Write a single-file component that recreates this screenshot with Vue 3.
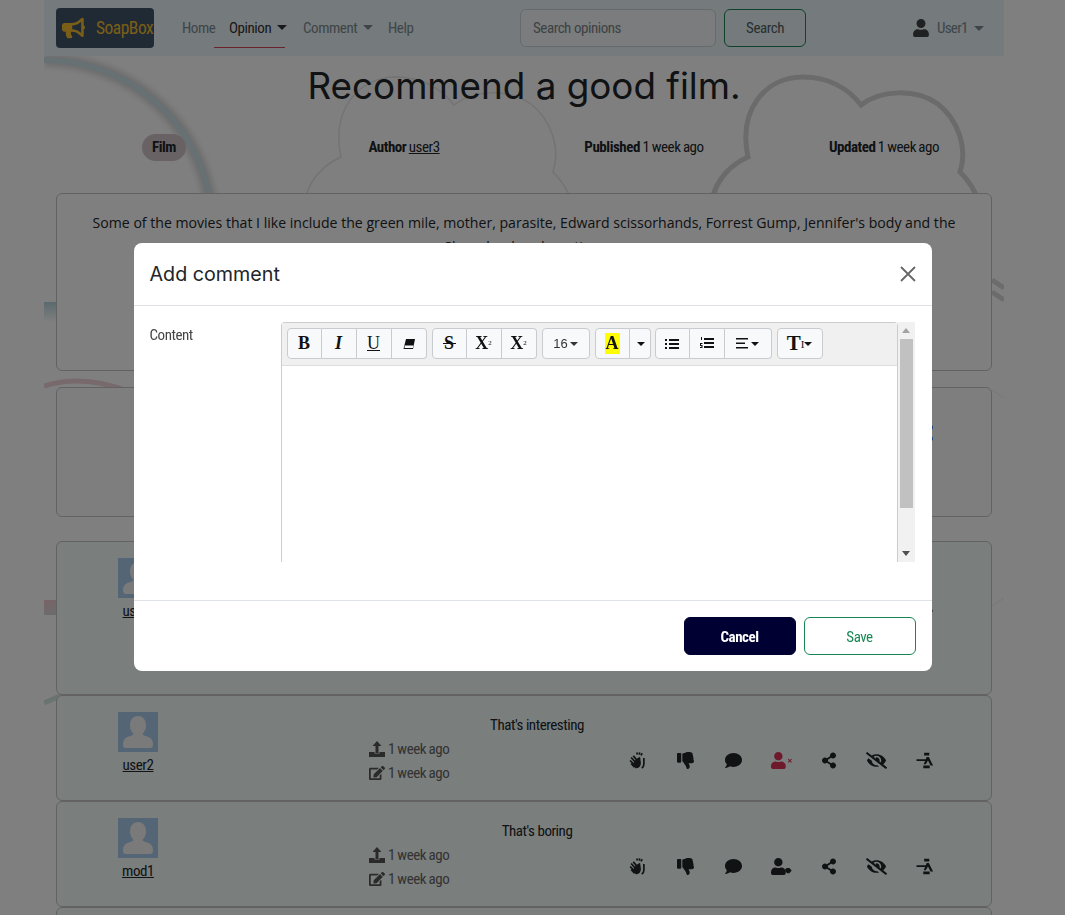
<template>
  <div class="page">
    <div class="container">
      <svg class="backdrop" width="960" height="860" viewBox="44 56 960 860" fill="none">
        <path class="arc-shadow" d="M44 60A168 166 0 0 1 212 226" />
        <path d="M44 60A168 166 0 0 1 212 226" stroke="#cfe1e6" stroke-width="6" />
        <path class="cloud-thin" d="M305 200C309 180 323 165 341 157C331 110 358 77 396 77C421 77 441 88 454 105C473 90 508 88 531 104C551 120 561 148 553 172C561 180 567 188 571 200" />
        <path class="cloud-thick" d="M712 200C716 180 730 165 748 157C738 110 765 77 803 77C828 77 848 88 861 105C880 90 915 88 938 104C958 120 968 148 960 172C968 180 974 188 978 200" />
        <rect x="44" y="302" width="12" height="20" fill="url(#fadeBlue)" />
        <path d="M44 386C70 378 100 380 130 392" stroke="#f0d4d8" stroke-width="5" />
        <rect x="44" y="600" width="12" height="15" fill="url(#fadePink)" />
        <path d="M44 703L60 696" stroke="#d5e6e0" stroke-width="5" />
        <path d="M992 280L1004 288M992 292L1004 300" stroke="#d8d8d8" stroke-width="5" />
        <path d="M992 390L1004 398M992 606L1004 598" stroke="#ececec" stroke-width="1" />
        <defs>
          <linearGradient id="fadeBlue" x1="0" y1="0" x2="0" y2="1">
            <stop offset="0" stop-color="#b5d4de" />
            <stop offset="1" stop-color="#ffffff" />
          </linearGradient>
          <linearGradient id="fadePink" x1="0" y1="0" x2="0" y2="1">
            <stop offset="0" stop-color="#f0c8ce" />
            <stop offset="1" stop-color="#d8d8d8" />
          </linearGradient>
        </defs>
      </svg>

      <nav class="navbar">
        <a class="brand">
          <svg class="brand-icon" viewBox="0 0 576 512"><path :d="paths.bullhorn" /></svg>
          <span>SoapBox</span>
        </a>
        <ul class="nav-links">
          <li class="link-home">Home</li>
          <li class="link-active">Opinion <i class="caret"></i></li>
          <li class="link-comment">Comment <i class="caret"></i></li>
          <li class="link-help">Help</li>
        </ul>
        <input class="search-input" placeholder="Search opinions" />
        <button class="search-btn">Search</button>
        <div class="user-menu">
          <svg class="user-icon" viewBox="0 0 448 512"><path :d="paths.user" /></svg>
          <span class="user-name">User1</span>
          <i class="caret"></i>
        </div>
      </nav>

      <h1 class="title">Recommend a good film.</h1>

      <div class="meta">
        <div><span class="pill">Film</span></div>
        <div><b>Author</b> <u>user3</u></div>
        <div><b>Published</b> 1 week ago</div>
        <div><b>Updated</b> 1 week ago</div>
      </div>

      <section class="card body-card">
        Some of the movies that I like include the green mile, mother, parasite, Edward scissorhands, Forrest Gump, Jennifer's body and the Shawshank redemption.
      </section>

      <section class="card stats-card">
        <svg class="stats-icon" viewBox="0 0 448 512"><path :d="paths.share" /></svg>
      </section>

      <div class="comments">
        <article v-for="row in comments" :key="row.user" class="card row" :style="{ height: row.height + 'px' }">
          <div class="who">
            <svg class="avatar" viewBox="0 0 40 40">
              <rect width="40" height="40" fill="#a8cbec" />
              <path d="M20 4c5.500 0 8 4.500 8 9.500 0 3.500-1.500 6.500-3.500 8.500 1 1.500 3 2 6 3 3 1.200 4.500 3.500 4.500 7.500 0 2.500-1 3.500-3 3.500H8c-2 0-3-1-3-3.500 0-4 1.500-6.300 4.500-7.500 3-1 5-1.500 6-3-2-2-3.500-5-3.500-8.500C12 8.500 14.500 4 20 4z" fill="#f4f4f4" />
            </svg>
            <u>{{ row.user }}</u>
          </div>
          <div class="main">
            <div class="comment-text">{{ row.text }}</div>
            <div class="details">
              <div class="dates">
                <div class="date">
                  <svg viewBox="0 0 16 16"><path d="M0 11h5.500v1.500h5V11H16v5H0zM6.500 12V5h-3L8 0l4.500 5h-3v7z" /></svg>
                  1 week ago
                </div>
                <div class="date">
                  <svg viewBox="0 0 576 512"><path :d="paths.edit" /></svg>
                  1 week ago
                </div>
              </div>
              <div class="actions">
                <span v-for="icon in row.icons" :key="icon" class="action" :class="{ danger: icon === 'userTimes' }">
                  <svg :viewBox="icons[icon].box" :style="{ width: icons[icon].width + 'px' }">
                    <path :d="icons[icon].d" />
                    <path v-if="icons[icon].lines" class="lines" :d="icons[icon].lines" />
                  </svg>
                </span>
              </div>
            </div>
          </div>
        </article>
        <article class="card row"></article>
      </div>
    </div>

    <div class="overlay">
      <div class="modal">
        <header class="modal-head">
          <h2>Add comment</h2>
          <svg class="close" viewBox="0 0 16 16"><path d="M1 1l14 14M15 1L1 15" /></svg>
        </header>
        <div class="modal-body">
          <label>Content</label>
          <div class="editor">
            <div class="editor-main">
              <div class="toolbar">
                <div class="group">
                  <button class="tool glyph"><b>B</b></button>
                  <button class="tool glyph"><b><i>I</i></b></button>
                  <button class="tool glyph"><u>U</u></button>
                  <button class="tool">
                    <svg width="14" height="14" viewBox="0 0 14 14"><path d="M4 2h9l-2 10H1.500z" fill="#111" /><path d="M2.800 8.500h8.700l-.6 2.600H2.500z" fill="#f8f9fa" /></svg>
                  </button>
                </div>
                <div class="group">
                  <button class="tool glyph"><b>S</b><i class="strike-bar"></i></button>
                  <button class="tool glyph"><b>X</b><sup>2</sup></button>
                  <button class="tool glyph"><b>X</b><sub>2</sub></button>
                </div>
                <div class="group">
                  <button class="tool size">16 <i class="caret small"></i></button>
                </div>
                <div class="group">
                  <button class="tool glyph"><b class="highlight">A</b></button>
                  <button class="tool narrow"><i class="caret small"></i></button>
                </div>
                <div class="group lists">
                  <button class="tool">
                    <svg width="14" height="12" viewBox="0 0 14 12"><path d="M0 1h2v2H0zM0 5h2v2H0zM0 9h2v2H0zM4 1h10v2H4zM4 5h10v2H4zM4 9h10v2H4z" fill="#111" /></svg>
                  </button>
                  <button class="tool">
                    <svg width="14" height="13" viewBox="0 0 14 13"><path d="M1 0h1v3H1zM0 6h2.500v1H1v1h1.500v3H0v-1h1.500V9H0zM4 1h10v2H4zM4 5h10v2H4zM4 9h10v2H4z" fill="#111" /></svg>
                  </button>
                  <button class="tool wide">
                    <svg width="12" height="11" viewBox="0 0 12 11"><path d="M0 0h12v1.600H0zM0 4.500h9v1.600H0zM0 9h12v1.600H0z" fill="#111" /></svg>
                    <i class="caret small"></i>
                  </button>
                </div>
                <div class="group">
                  <button class="tool wide glyph height"><b>T</b><span class="thin">I</span><i class="caret small"></i></button>
                </div>
              </div>
              <div class="editable"></div>
            </div>
            <div class="scrollbar">
              <i class="arrow up"></i>
              <div class="thumb"></div>
              <i class="arrow down"></i>
            </div>
          </div>
        </div>
        <footer class="modal-foot">
          <button class="btn-cancel">Cancel</button>
          <button class="btn-save">Save</button>
        </footer>
      </div>
    </div>
  </div>
</template>

<script setup>
const paths = {
  bullhorn: 'M576 240c0-23.63-12.95-44.04-32-55.12V32.01C544 23.26 537.02 0 512 0c-7.12 0-14.19 2.38-19.98 7.02l-85.03 68.03C364.28 109.19 310.66 128 256 128H64c-35.35 0-64 28.65-64 64v96c0 35.35 28.65 64 64 64h33.7c-1.39 10.48-2.18 21.14-2.18 32 0 39.77 9.26 77.35 25.56 110.94 5.19 10.69 16.52 17.06 28.4 17.06h74.28c26.05 0 41.69-29.84 25.9-50.56-16.4-21.52-26.15-48.36-26.15-77.44 0-11.11 1.62-21.79 4.41-32H256c54.66 0 108.28 18.81 150.98 52.95l85.03 68.03a32.023 32.023 0 0 0 19.98 7.02c24.92 0 32-22.78 32-32V295.13C563.05 284.04 576 263.63 576 240zm-96 141.42l-33.05-26.44C392.95 311.78 325.12 288 256 288v-96c69.12 0 136.95-23.78 190.95-66.98L480 98.58v282.84z',
  user: 'M224 256c70.7 0 128-57.3 128-128S294.7 0 224 0 96 57.3 96 128s57.3 128 128 128zm89.6 32h-16.7c-22.2 10.2-46.9 16-72.9 16s-50.6-5.8-72.9-16h-16.7C60.2 288 0 348.2 0 422.4V464c0 26.5 21.5 48 48 48h352c26.5 0 48-21.5 48-48v-41.6c0-74.2-60.2-134.4-134.4-134.4z',
  edit: 'M402.6 83.2l90.2 90.2c3.8 3.8 3.8 10 0 13.8L274.4 405.6l-92.8 10.3c-12.4 1.4-22.9-9.1-21.5-21.5l10.3-92.8L388.8 83.2c3.8-3.8 10-3.8 13.8 0zm162-22.9l-48.8-48.8c-15.2-15.2-39.9-15.2-55.2 0l-35.4 35.4c-3.8 3.8-3.8 10 0 13.8l90.2 90.2c3.8 3.8 10 3.8 13.8 0l35.4-35.4c15.2-15.3 15.2-40 0-55.2zM384 346.2V448H64V128h229.8c3.2 0 6.2-1.3 8.5-3.5l40-40c7.6-7.6 2.2-20.5-8.5-20.5H48C21.5 64 0 85.5 0 112v352c0 26.5 21.5 48 48 48h352c26.5 0 48-21.5 48-48V306.2c0-10.7-12.9-16-20.5-8.5l-40 40c-2.2 2.3-3.5 5.3-3.5 8.5z',
  share: 'M352 320c-22.608 0-43.387 7.819-59.79 20.895l-102.486-64.054a96.551 96.551 0 0 0 0-41.683l102.486-64.054C308.613 184.181 329.392 192 352 192c53.019 0 96-42.981 96-96S405.019 0 352 0s-96 42.981-96 96c0 7.158.79 14.13 2.276 20.841L155.790 180.895C139.387 167.819 118.608 160 96 160c-53.019 0-96 42.981-96 96s42.981 96 96 96c22.608 0 43.387-7.819 59.79-20.895l102.486 64.054A96.301 96.301 0 0 0 256 416c0 53.019 42.981 96 96 96s96-42.981 96-96-42.981-96-96-96z',
}

const icons = {
  clap: {
    box: '0 0 20 20',
    width: 17,
    d: 'M8 8.500L13 5.500 14 13C14 17 11.500 19.500 8 19L4 15.500z',
    lines: 'M2.500 6.500l6 6.500M1.300 10l5.500 5.500M5 4.500l6 7M2.500 13.500l4 4.500M9.500 0.500v2.500M12.500 .5l-.5 2.500M15.500 1.500l-1.500 2.500M17.500 7v7c0 2-1 4-2.500 5',
  },
  thumbsDown: {
    box: '0 0 512 512',
    width: 17,
    d: 'M0 56v240c0 13.255 10.745 24 24 24h80c13.255 0 24-10.745 24-24V56c0-13.255-10.745-24-24-24H24C10.745 32 0 42.745 0 56zm312 456c-20.183 0-29.485-39.293-33.931-57.795-5.206-21.666-10.589-44.070-25.393-58.902-32.469-32.524-49.503-73.967-89.117-113.111a11.980 11.980 0 0 1-3.558-8.521V59.901c0-6.541 5.243-11.878 11.783-11.998 15.831-.29 36.694-9.079 52.651-16.178C256.189 17.598 295.709.017 343.995 0h2.844c42.777 0 93.363.413 113.774 29.737 8.392 12.057 10.446 27.034 6.148 44.632 16.312 17.053 25.063 48.863 16.382 74.757 17.544 23.432 19.143 56.132 9.308 79.469l.11.11c11.893 11.949 19.523 31.259 19.439 49.197-.156 30.352-26.157 58.098-59.553 58.098H350.723C358.030 364.340 384 388.132 384 430.548 384 504 336 512 312 512z',
  },
  comment: {
    box: '0 0 512 512',
    width: 17,
    d: 'M256 32C114.600 32 0 125.100 0 240c0 49.600 21.400 95 57 130.700C44.500 421.100 2.700 466 2.200 466.500c-2.200 2.300-2.800 5.700-1.500 8.700S4.800 480 8 480c66.300 0 116-31.800 140.600-51.400 32.700 12.300 69 19.400 107.400 19.400 141.400 0 256-93.100 256-208S397.400 32 256 32z',
  },
  userTimes: {
    box: '0 0 640 512',
    width: 21,
    d: paths.user + 'M596 262l40-40-22-22-40 40-40-40-22 22 40 40-40 40 22 22 40-40 40 40 22-22z',
  },
  userTag: {
    box: '0 0 640 512',
    width: 21,
    d: paths.user + 'M482 300h78l70 78-70 80h-66l-62-60v-60z',
  },
  share: { box: '0 0 448 512', width: 14, d: paths.share },
  eyeSlash: {
    box: '0 0 640 512',
    width: 21,
    d: 'M320 400c-75.850 0-137.250-58.710-142.900-133.110L72.200 185.820c-13.790 17.300-26.480 35.590-36.720 55.590a32.350 32.350 0 0 0 0 29.190C89.710 376.410 197.070 448 320 448c26.910 0 52.870-4 77.890-10.460L346 397.390a144.130 144.130 0 0 1-26 2.610zm313.820 58.100l-110.550-85.440a331.250 331.250 0 0 0 81.250-102.070 32.350 32.350 0 0 0 0-29.190C550.290 135.590 442.930 64 320 64a308.150 308.150 0 0 0-147.320 37.700L45.460 3.370A16 16 0 0 0 23 6.180L3.370 31.450A16 16 0 0 0 6.180 53.900l588.360 454.730a16 16 0 0 0 22.460-2.810l19.640-25.270a16 16 0 0 0-2.820-22.450zm-183.720-142l-39.300-30.380A94.750 94.750 0 0 0 416 256a94.760 94.760 0 0 0-121.310-92.210A47.650 47.650 0 0 1 304 192a46.640 46.640 0 0 1-1.540 10l-73.610-56.890A142.310 142.310 0 0 1 320 112a143.920 143.920 0 0 1 144 144c0 21.630-5.290 41.790-13.900 60.110z',
  },
  pass: {
    box: '0 0 20 20',
    width: 18,
    d: 'M9 1h6v3H9zM0 8.500h11.500v2H0zM12 6h2.500l5 10h-3l-3-6-2.500 4.500H8.500zM8 16h7.500v3H8z',
  },
}

const actions = ['clap', 'thumbsDown', 'comment', 'userTag', 'share', 'eyeSlash', 'pass']

const comments = [
  { user: 'user1', text: 'I love that film', height: 154, icons: actions },
  { user: 'user2', text: "That's interesting", height: 106, icons: ['clap', 'thumbsDown', 'comment', 'userTimes', 'share', 'eyeSlash', 'pass'] },
  { user: 'mod1', text: "That's boring", height: 106, icons: actions },
]
</script>

<style>
html,
body {
  overflow: hidden;
  height: 100%;
  background: #fff;
}
</style>

<style scoped>
.page {
  box-sizing: border-box;
  min-height: 100vh;
  padding-right: 17px;
  font-family: "Roboto Condensed", Roboto, sans-serif;
  font-stretch: 62.5%;
  font-size: 15px;
  letter-spacing: -0.45px;
  color: #212529;
}

.container {
  position: relative;
  width: 960px;
  margin: 0 auto;
  padding: 0 12px;
  box-sizing: border-box;
}

.backdrop {
  position: absolute;
  left: 0;
  top: 56px;
}

.arc-shadow {
  stroke: #d6d6d6;
  stroke-width: 12;
  filter: blur(3px);
}

.cloud-thin {
  stroke: #e6e6e6;
  stroke-width: 1.500;
}

.cloud-thick {
  stroke: #d6d6d6;
  stroke-width: 5;
}

.navbar {
  position: relative;
  display: flex;
  align-items: center;
  height: 56px;
  margin: 0 -12px;
  padding: 0 12px;
  box-sizing: border-box;
  background: #eaf5f8;
}

.brand {
  display: flex;
  align-items: center;
  gap: 11px;
  box-sizing: border-box;
  width: 98px;
  height: 40px;
  padding-left: 6px;
  border-radius: 4px;
  background: #405568;
  color: #f4bd30;
  font-size: 17.500px;
  letter-spacing: -0.5px;
}

.brand-icon {
  width: 23px;
  height: 24px;
  fill: #f4bd30;
  flex: none;
}

.nav-links {
  display: flex;
  list-style: none;
  margin: 0 0 0 28px;
  padding: 0;
  height: 40px;
  align-items: center;
  color: #7d8a90;
}

.nav-links li {
  line-height: 40px;
  white-space: nowrap;
}

.link-home {
  width: 32px;
}

.link-active {
  box-sizing: border-box;
  width: 71px;
  padding-left: 15px;
  border-bottom: 1px solid #d9465c;
  color: #333;
  height: 40px;
}

.link-comment {
  width: 85px;
  margin-left: 18px;
}

.link-help {
  width: 32px;
}

.caret {
  display: inline-block;
  width: 0;
  height: 0;
  margin-left: 3px;
  vertical-align: 3px;
  border-top: 5px solid currentColor;
  border-left: 5px solid transparent;
  border-right: 5px solid transparent;
}

.caret.small {
  border-top-width: 4px;
  border-left-width: 4px;
  border-right-width: 4px;
  margin-left: 2px;
  vertical-align: 2px;
}

.search-input {
  box-sizing: border-box;
  width: 196px;
  height: 38px;
  margin-left: 100px;
  padding: 0 12px;
  border: 1px solid #ced4da;
  border-radius: 6px;
  background: #f4f9fa;
  font: inherit;
  letter-spacing: inherit;
}

.search-input::placeholder {
  color: #7d8488;
}

.search-btn {
  box-sizing: border-box;
  width: 82px;
  height: 38px;
  margin-left: 8px;
  border: 1px solid #198754;
  border-radius: 6px;
  background: transparent;
  color: #4f5f60;
  font: inherit;
  letter-spacing: inherit;
}

.user-menu {
  display: flex;
  align-items: center;
  margin-left: auto;
  margin-right: 8px;
  gap: 8px;
  color: #7d8a90;
}

.user-name {
  width: 29px;
  letter-spacing: -0.7px;
}

.user-menu .caret {
  margin-left: 0;
  vertical-align: 0;
}

.user-icon {
  width: 16px;
  height: 18px;
  fill: #404346;
}

.title {
  position: relative;
  margin: 8px 0 0;
  font-family: Inter, Roboto, sans-serif;
  font-stretch: normal;
  letter-spacing: 0;
  font-weight: 400;
  font-size: 36.800px;
  line-height: 44px;
  text-align: center;
  color: #212529;
}

.meta {
  position: relative;
  display: grid;
  grid-template-columns: repeat(4, 240px);
  margin: 0 -12px;
  height: 85px;
  padding-top: 26px;
  box-sizing: border-box;
  text-align: center;
  line-height: 27px;
  word-spacing: -0.600px;
}

.pill {
  display: inline-block;
  width: 44px;
  height: 27px;
  border-radius: 14px;
  background: #d3c5cb;
  font-weight: 700;
}

.card {
  position: relative;
  box-sizing: border-box;
  border: 1px solid #c4c4c4;
  border-radius: 6px;
  background: #fff;
}

.body-card {
  height: 178px;
  padding: 17px 32px;
  font-family: "Open Sans", sans-serif;
  font-stretch: normal;
  letter-spacing: 0;
  font-size: 14.100px;
  line-height: 24px;
  text-align: center;
}

.stats-card {
  height: 130px;
  margin-top: 16px;
  background: #fcfdfc;
}

.stats-icon {
  position: absolute;
  left: 860px;
  top: 36px;
  width: 16px;
  height: 18px;
  fill: #0d6efd;
}

.comments {
  margin-top: 24px;
}

.row {
  display: grid;
  grid-template-columns: 162px 1fr;
  padding-top: 16px;
  background: #f4fcfa;
}

.who {
  display: flex;
  flex-direction: column;
  align-items: center;
  line-height: 26px;
}

.avatar {
  display: block;
  width: 40px;
  height: 40px;
}

.main {
  padding-left: 2px;
}

.comment-text {
  width: 632px;
  padding-top: 1px;
  margin-bottom: -1px;
  text-align: center;
  line-height: 25px;
}

.details {
  display: grid;
  grid-template-columns: 393px 336px;
}

.dates {
  padding-left: 148px;
  color: #666;
}

.date {
  display: flex;
  align-items: center;
  gap: 3px;
  height: 24px;
  word-spacing: -0.600px;
}

.date svg {
  width: 16px;
  height: 16px;
  fill: #555;
}

.actions {
  display: flex;
  align-items: center;
  height: 47px;
}

.action {
  width: 47.800px;
  display: flex;
  justify-content: center;
  color: #212529;
}

.action svg {
  height: 17px;
  fill: currentColor;
}

.lines {
  fill: none;
  stroke: currentColor;
  stroke-width: 2;
}

.action.danger {
  color: #dc3558;
}

.overlay {
  position: fixed;
  inset: 0;
  display: flex;
  align-items: center;
  justify-content: center;
  padding-bottom: 1px;
  background: rgba(0, 0, 0, 0.5);
}

.modal {
  display: flex;
  flex-direction: column;
  box-sizing: border-box;
  width: 798px;
  height: 428px;
  border-radius: 8px;
  background: #fff;
}

.modal-head {
  display: flex;
  align-items: center;
  justify-content: space-between;
  box-sizing: border-box;
  height: 63px;
  padding: 0 16px;
  border-bottom: 1px solid #dee2e6;
}

.modal-head h2 {
  margin: 0;
  font-family: Inter, Roboto, sans-serif;
  font-stretch: normal;
  letter-spacing: 0;
  font-weight: 400;
  font-size: 19.700px;
  color: #212529;
}

.close {
  width: 16px;
  height: 16px;
  fill: none;
  stroke: #666;
  stroke-width: 1.800;
}

.modal-body {
  display: grid;
  grid-template-columns: 131px 634px;
  height: 295px;
  box-sizing: border-box;
  padding: 16px 0 0 16px;
  border-bottom: 1px solid #dee2e6;
}

.modal-body label {
  padding-top: 1px;
  line-height: 24px;
  color: #444;
}

.editor {
  display: flex;
  height: 240px;
  overflow: hidden;
}

.editor-main {
  flex: 1;
  border: 1px solid #ccc;
  border-bottom: none;
  border-radius: 4px 4px 0 0;
}

.toolbar {
  display: flex;
  gap: 5px;
  box-sizing: border-box;
  height: 43px;
  padding: 5px;
  background: #f0f0f0;
  border-bottom: 1px solid #ddd;
}

.group {
  display: flex;
  height: 31px;
}

.lists {
  margin-left: -1px;
}

.tool {
  position: relative;
  display: flex;
  align-items: center;
  justify-content: center;
  box-sizing: border-box;
  width: 35px;
  height: 31px;
  padding: 0;
  border: 1px solid #c8ccd0;
  border-left: none;
  background: #f8f9fa;
  color: #333;
  font-family: "Liberation Sans", sans-serif;
  font-stretch: normal;
  letter-spacing: 0;
  font-size: 13px;
}

.tool:first-child {
  border-left: 1px solid #c8ccd0;
  border-radius: 4px 0 0 4px;
}

.tool:last-child {
  border-radius: 0 4px 4px 0;
}

.tool:only-child {
  border-radius: 4px;
}

.glyph {
  font-family: "Liberation Serif", serif;
  font-size: 18px;
  color: #111;
}

.glyph sup,
.glyph sub {
  font-size: 7px;
  line-height: 1;
}

.strike-bar {
  position: absolute;
  left: 10px;
  right: 10px;
  top: 14px;
  height: 1px;
  background: #111;
}

.size {
  width: 48px;
}

.narrow {
  width: 21px;
  color: #111;
}

.wide {
  width: 47px;
  gap: 1px;
  color: #111;
}

.highlight {
  background: #ff0;
  padding: 0 1px;
}

.height {
  width: 46px;
  font-size: 21px;
  gap: 0;
}

.height .caret {
  margin-left: 0;
}

.thin {
  font-weight: 400;
  font-size: 11px;
}

.editable {
  height: 196px;
  background: #fff;
}

.scrollbar {
  display: flex;
  flex-direction: column;
  align-items: center;
  width: 17px;
  background: #f1f1f1;
}

.arrow {
  flex: none;
  width: 0;
  height: 0;
  margin: 6px 0;
  border-left: 4px solid transparent;
  border-right: 4px solid transparent;
}

.arrow.up {
  border-bottom: 5px solid #a3a3a3;
}

.arrow.down {
  margin-top: auto;
  border-top: 5px solid #505050;
}

.thumb {
  width: 13px;
  height: 169px;
  background: #c1c1c1;
}

.modal-foot {
  display: flex;
  justify-content: flex-end;
  align-items: center;
  gap: 8px;
  flex: 1;
  padding-right: 16px;
}

.modal-foot button {
  box-sizing: border-box;
  width: 112px;
  height: 38px;
  padding-top: 2px;
  border-radius: 6px;
  font: inherit;
  letter-spacing: inherit;
}

.btn-cancel {
  border: 1px solid #000033;
  background: #000033;
  color: #fff;
  font-weight: 700 !important;
}

.btn-save {
  border: 1px solid #198754;
  background: #fff;
  color: #198754;
}
</style>
